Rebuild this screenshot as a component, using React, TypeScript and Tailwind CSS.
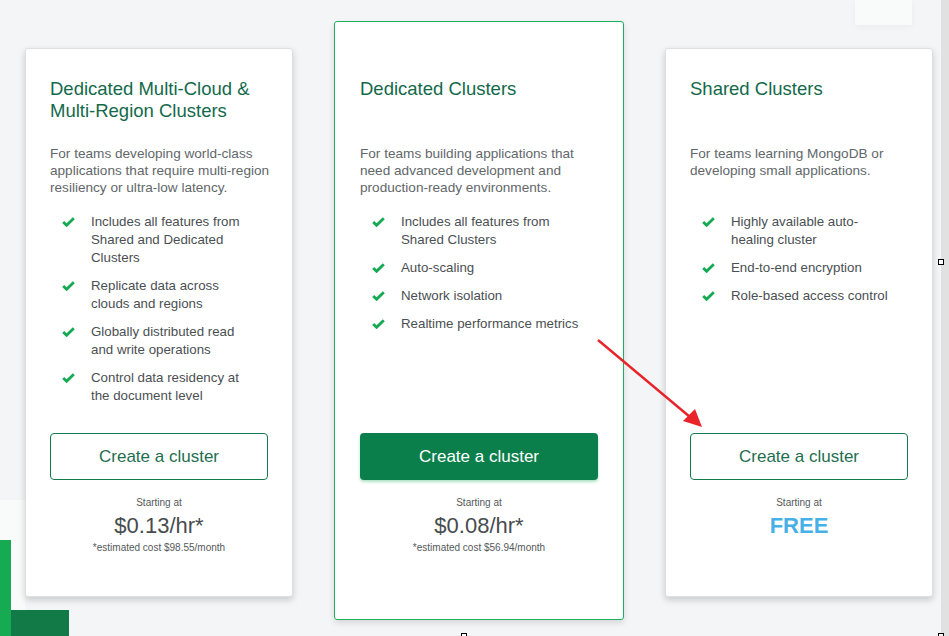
import React from "react";

const Check = () => (
  <svg width="13" height="10" viewBox="0 0 13 10" className="shrink-0 mt-[4px]">
    <path d="M1.2 5 L4.6 8.3 L11.8 1.2" fill="none" stroke="#13aa52" strokeWidth="2.8" />
  </svg>
);

type Plan = {
  title: React.ReactNode;
  desc: React.ReactNode;
  features: React.ReactNode[];
  featured?: boolean;
  price: React.ReactNode;
};

const FeatureList = ({ items }: { items: React.ReactNode[] }) => (
  <ul className="h-[221px] pl-[12px] flex flex-col gap-[10px]">
    {items.map((f, i) => (
      <li key={i} className="flex gap-[16px] text-[13.3px] leading-[18px] text-[#4a4f52] whitespace-nowrap">
        <Check />
        <span>{f}</span>
      </li>
    ))}
  </ul>
);

const Card = ({ plan }: { plan: Plan }) => {
  const featured = plan.featured;
  return (
    <div
      className={
        featured
          ? "w-[290px] h-[599px] shrink-0 bg-white border border-[#1fae5d] rounded-[3px] pt-[56px] px-[25px] shadow-[0_3px_6px_rgba(0,0,0,0.12)] relative z-10"
          : "w-[268px] h-[549px] mt-[27px] shrink-0 bg-white border border-[#dedfe0] rounded-[3px] pt-[29px] px-[24px] shadow-[0_3px_7px_rgba(0,0,0,0.18)] relative z-10"
      }
    >
      <h2 className="h-[67px] text-[18.5px] leading-[22px] text-[#13694a] whitespace-nowrap">{plan.title}</h2>
      <p className="h-[68px] text-[13.6px] leading-[17px] text-[#62676a] whitespace-nowrap">{plan.desc}</p>
      <FeatureList items={plan.features} />
      {featured ? (
        <button className="w-full h-[47px] -mt-px rounded-[4px] bg-[#0b7f4b] text-white text-[17px] shadow-[0_2px_3px_rgba(19,170,82,0.35)]">
          Create a cluster
        </button>
      ) : (
        <button className="w-full h-[47px] -mt-px rounded-[4px] border border-[#137a4b] bg-white text-[#1f6e4f] text-[17px]">
          Create a cluster
        </button>
      )}
      <div className="mt-[17px] text-center text-[10px] leading-[12px] text-[#55595c]">Starting at</div>
      {plan.price}
    </div>
  );
};

const Price = ({ value, est }: { value: string; est: string }) => (
  <>
    <div className="mt-[4px] text-center text-[22px] leading-[26px] text-[#464c4f]">{value}</div>
    <div className="mt-[3px] text-center text-[10px] leading-[12px] text-[#55595c]">{est}</div>
  </>
);

const plans: Plan[] = [
  {
    title: (
      <>
        Dedicated Multi-Cloud &amp;
        <br />
        Multi-Region Clusters
      </>
    ),
    desc: (
      <>
        For teams developing world-class
        <br />
        applications that require multi-region
        <br />
        resiliency or ultra-low latency.
      </>
    ),
    features: [
      <>
        Includes all features from
        <br />
        Shared and Dedicated
        <br />
        Clusters
      </>,
      <>
        Replicate data across
        <br />
        clouds and regions
      </>,
      <>
        Globally distributed read
        <br />
        and write operations
      </>,
      <>
        Control data residency at
        <br />
        the document level
      </>,
    ],
    price: <Price value="$0.13/hr*" est="*estimated cost $98.55/month" />,
  },
  {
    title: "Dedicated Clusters",
    desc: (
      <>
        For teams building applications that
        <br />
        need advanced development and
        <br />
        production-ready environments.
      </>
    ),
    features: [
      <>
        Includes all features from
        <br />
        Shared Clusters
      </>,
      "Auto-scaling",
      "Network isolation",
      "Realtime performance metrics",
    ],
    featured: true,
    price: <Price value="$0.08/hr*" est="*estimated cost $56.94/month" />,
  },
  {
    title: "Shared Clusters",
    desc: (
      <>
        For teams learning MongoDB or
        <br />
        developing small applications.
      </>
    ),
    features: [
      <>
        Highly available auto-
        <br />
        healing cluster
      </>,
      "End-to-end encryption",
      "Role-based access control",
    ],
    price: (
      <div className="mt-[4px] text-center text-[22px] leading-[26px] font-bold text-[#47b0e6]">FREE</div>
    ),
  },
];

export default function App() {
  return (
    <div
      className="relative w-[949px] h-[636px] overflow-hidden bg-[#f4f5f7]"
      style={{ fontFamily: '"Liberation Sans", Arial, sans-serif' }}
    >
      {/* background decorations */}
      <div className="absolute left-0 top-[500px] w-[25px] h-[136px] bg-[#f9fafa]" />
      <div className="absolute left-0 top-[540px] w-[11px] h-[96px] bg-[#16ab53]" />
      <div className="absolute left-[11px] top-[610px] w-[58px] h-[26px] bg-[#127a47]" />
      <div className="absolute left-[855px] top-0 w-[57px] h-[25px] bg-[#f9fafa] shadow-[0_2px_6px_rgba(0,0,0,0.04)]" />
      <div className="absolute right-0 top-0 w-[8px] h-full bg-[#e1e1e1]" />

      <div className="relative flex items-start gap-[41px] pl-[25px] pt-[21px]">
        {plans.map((p, i) => (
          <Card key={i} plan={p} />
        ))}
      </div>

      {/* annotation arrow */}
      <svg className="absolute left-0 top-0 z-20 pointer-events-none" width="949" height="636">
        <line x1="598" y1="340" x2="690" y2="417" stroke="#e8232a" strokeWidth="2.4" />
        <polygon points="702,427 683,421 695,409" fill="#e8232a" />
      </svg>

      {/* selection handles */}
      <div className="absolute left-[938px] top-[259px] w-[6px] h-[6px] bg-white border border-black z-30" />
      <div className="absolute left-[461px] top-[633px] w-[6px] h-[6px] bg-white border border-black z-30" />
      <div className="absolute left-[938px] top-[633px] w-[6px] h-[6px] bg-white border border-black z-30" />
    </div>
  );
}
